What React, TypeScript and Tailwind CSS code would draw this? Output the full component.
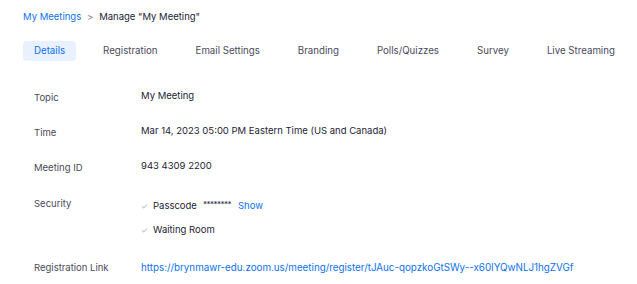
import { Check } from "lucide-react";

const tabs = ["Details", "Registration", "Email Settings", "Branding", "Polls/Quizzes", "Survey", "Live Streaming"];

const rows = [
  { label: "Topic", value: "My Meeting" },
  { label: "Time", value: "Mar 14, 2023 05:00 PM Eastern Time (US and Canada)" },
  { label: "Meeting ID", value: "943 4309 2200" },
];

export default function App() {
  return (
    <div className="w-[637px] h-[284px] bg-white overflow-hidden text-[9.5px] leading-[14px] text-[#232333]" style={{ fontFamily: "Inter, 'Liberation Sans', sans-serif" }}>
      {/* breadcrumb */}
      <div className="flex items-center gap-[6px] pl-[23px] pt-[10px] h-[24px] whitespace-nowrap">
        <span className="text-[#0e72ed]">My Meetings</span>
        <span className="text-[#747487] text-[9px]">&gt;</span>
        <span>Manage "My Meeting"</span>
      </div>

      {/* tabs */}
      <div className="flex gap-[16px] pl-[23px] mt-[17px] whitespace-nowrap text-[9.7px]">
        {tabs.map((t, i) => (
          <div
            key={t}
            className={
              i === 0
                ? "px-[11px] h-[20px] flex items-center rounded-[4px] bg-[#e8f1fd] text-[#0e72ed]"
                : "px-[11px] h-[20px] flex items-center text-[#4a4a5a]"
            }
          >
            {t}
          </div>
        ))}
      </div>

      {/* details */}
      <div className="pl-[34px] pt-[28px] whitespace-nowrap">
        {rows.map((r) => (
          <div key={r.label} className="flex h-[35px]">
            <div className="w-[107px] text-[#4a4a5a] pt-[2px]">{r.label}</div>
            <div>{r.value}</div>
          </div>
        ))}
        <div className="flex h-[67px]">
          <div className="w-[107px] text-[#4a4a5a] pt-[3px]">Security</div>
          <div className="flex flex-col gap-[10px] pt-[5px]">
            <div className="flex items-center gap-[5px]">
              <Check size={7} className="text-[#747487]" />
              <span>Passcode</span>
              <span className="ml-[1px] text-[8px] tracking-[-0.5px] -translate-y-[2px]">********</span>
              <span className="ml-[2px] text-[#0e72ed]">Show</span>
            </div>
            <div className="flex items-center gap-[5px]">
              <Check size={7} className="text-[#747487]" />
              <span>Waiting Room</span>
            </div>
          </div>
        </div>
        <div className="flex">
          <div className="w-[107px] text-[#4a4a5a]">Registration Link</div>
          <div className="text-[#0e72ed] text-[9.8px]">https://brynmawr-edu.zoom.us/meeting/register/tJAuc-qopzkoGtSWy--x60IYQwNLJ1hgZVGf</div>
        </div>
      </div>
    </div>
  );
}
